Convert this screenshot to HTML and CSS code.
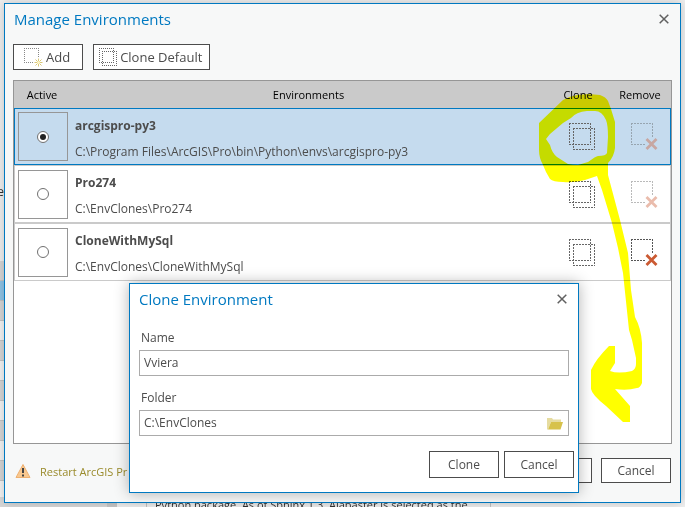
FILE: index.html
```html
<!DOCTYPE html>
<html lang="en">
<head>
    <meta charset="UTF-8">
    <meta name="viewport" content="width=device-width, initial-scale=1.0">
    <title>Manage Environments</title>
    <link rel="stylesheet" href="styles.css">
</head>
<body>
    <!-- Shared icon shapes -->
    <svg class="defs" width="0" height="0" aria-hidden="true">
        <symbol id="icon-clone" viewBox="0 0 27 27">
            <path d="M0 .5H22M.5 0V22M0 21.5H22M21.5 0V22M4 5.5H26M4.5 5V27M4 26.5H26M25.5 5V27" fill="none" stroke="#666" stroke-dasharray="2 1"/>
        </symbol>
        <symbol id="icon-remove" viewBox="0 0 27 27">
            <path d="M0 .5H22M.5 0V22M0 21.5H15M21.5 0V14" fill="none" stroke="#555" stroke-dasharray="2 1"/>
            <path d="M15.5 16L25.5 26M25.5 16L15.5 26" fill="none" stroke="#cb5a33" stroke-width="2.8"/>
        </symbol>
    </svg>

    <!-- Application behind the windows -->
    <div class="backdrop">
        <div class="side-list">
            <span class="side-text">e</span>
            <i class="grey"></i><i class="blue"></i><i class="grey"></i><i></i><i class="grey"></i><i></i><i class="grey"></i><i></i><i class="grey"></i><i></i><i class="grey"></i><i></i>
        </div>
        <div class="bottom-strip">
            <div class="list-end"></div>
            <div class="scroll-end"></div>
            <p class="package-text">Python package. As of Sphinx 1.3, Alabaster is selected as the</p>
        </div>
    </div>

    <main class="window">
        <header class="title-bar">
            <h1>Manage Environments</h1>
            <button class="close" aria-label="Close">
                <svg width="10" height="10" viewBox="0 0 10 10"><path d="M.7 .7L9.3 9.3M9.3 .7L.7 9.3" stroke="#606060" stroke-width="1.5"/></svg>
            </button>
        </header>

        <div class="toolbar">
            <button class="tool add">
                <svg width="19" height="19" viewBox="0 0 19 19">
                    <path d="M0 .5H15M.5 0V15M0 14.5H10M14.5 0V10" fill="none" stroke="#888" stroke-dasharray="1 1"/>
                    <path d="M14.5 10.5V18.5M10.5 14.5H18.5M11.5 11.5L17.5 17.5M17.5 11.5L11.5 17.5" stroke="#d9c878"/>
                    <circle cx="14.5" cy="14.5" r="1.5" fill="#fff6c9"/>
                </svg>
                Add
            </button>
            <button class="tool">
                <svg width="18" height="18" viewBox="0 0 18 18">
                    <path d="M0 .5H15M.5 0V15M0 14.5H15M14.5 0V15M3 3.5H18M3.5 3V18M3 17.5H18M17.5 3V18" fill="none" stroke="#666" stroke-dasharray="1 1"/>
                </svg>
                Clone Default
            </button>
        </div>

        <div class="env-list">
            <table class="env-table">
                <thead>
                    <tr>
                        <th class="col-active">Active</th>
                        <th>Environments</th>
                        <th class="col-clone">Clone</th>
                        <th class="col-remove">Remove</th>
                    </tr>
                </thead>
                <tbody>
                    <tr class="selected">
                        <td><label class="pick"><input type="radio" name="env" aria-label="arcgispro-py3" checked></label></td>
                        <td class="env">
                            <strong>arcgispro-py3</strong>
                            <span>C:\Program Files\ArcGIS\Pro\bin\Python\envs\arcgispro-py3</span>
                        </td>
                        <td><button class="icon" aria-label="Clone arcgispro-py3"><svg width="27" height="27"><use href="#icon-clone"/></svg></button></td>
                        <td><button class="icon" aria-label="Remove arcgispro-py3" disabled><svg width="27" height="27"><use href="#icon-remove"/></svg></button></td>
                    </tr>
                    <tr>
                        <td><label class="pick"><input type="radio" name="env" aria-label="Pro274"></label></td>
                        <td class="env">
                            <strong>Pro274</strong>
                            <span>C:\EnvClones\Pro274</span>
                        </td>
                        <td><button class="icon" aria-label="Clone Pro274"><svg width="27" height="27"><use href="#icon-clone"/></svg></button></td>
                        <td><button class="icon" aria-label="Remove Pro274" disabled><svg width="27" height="27"><use href="#icon-remove"/></svg></button></td>
                    </tr>
                    <tr>
                        <td><label class="pick"><input type="radio" name="env" aria-label="CloneWithMySql"></label></td>
                        <td class="env">
                            <strong>CloneWithMySql</strong>
                            <span>C:\EnvClones\CloneWithMySql</span>
                        </td>
                        <td><button class="icon" aria-label="Clone CloneWithMySql"><svg width="27" height="27"><use href="#icon-clone"/></svg></button></td>
                        <td><button class="icon" aria-label="Remove CloneWithMySql"><svg width="27" height="27"><use href="#icon-remove"/></svg></button></td>
                    </tr>
                </tbody>
            </table>
        </div>

        <footer class="actions">
            <svg width="16" height="16" viewBox="0 0 16 16">
                <path d="M8 1.5L15 14.5H1Z" fill="#f9c88f" stroke="#eeb071" stroke-linejoin="round"/>
                <path d="M8 5V10M8 11.5V13.5" stroke="#444" stroke-width="2"/>
            </svg>
            <span class="warning">Restart ArcGIS Pr</span>
            <button class="action" aria-label="OK"></button>
            <button class="action">Cancel</button>
        </footer>
    </main>

    <!-- Highlighter from the Clone button to the dialog -->
    <svg class="marker" width="685" height="507" viewBox="0 0 685 507" aria-hidden="true">
        <path fill="#ff0" fill-rule="evenodd" d="M577 95L588 94L600 95Q606 97 608 101L611 109L615 122V148Q614 157 608 163V175L620 220L628 253L631 290L635 317Q641 328 642 343V383Q640 388 637 388Q627 391 615 389L630 406V422H623L606 406Q592 395 591 389V370Q596 359 609 346H615V363L610 371Q618 374 632 371Q636 369 636 364V358L632 340L629 330L623 273L618 248L612 223L602 190L597 176L585 180Q574 183 563 182Q553 182 550 179L546 172L543 165Q539 158 539 150V123L563 100Q570 96 577 95ZM587 111Q576 112 571 118L563 123L550 134L546 139L550 145Q552 153 557 157L568 164Q573 165 578 165L588 162Q596 156 598 156Q606 156 607 153L608 137Q608 125 606 120Q602 111 595 111Z"/>
    </svg>

    <form class="dialog" role="dialog" aria-labelledby="dialog-title">
        <div class="title-bar">
            <h2 id="dialog-title">Clone Environment</h2>
            <button type="button" class="close" aria-label="Close">
                <svg width="10" height="10" viewBox="0 0 10 10"><path d="M.7 .7L9.3 9.3M9.3 .7L.7 9.3" stroke="#606060" stroke-width="1.5"/></svg>
            </button>
        </div>
        <label for="name">Name</label>
        <div class="field">
            <input type="text" id="name" value="Vviera">
        </div>
        <label for="folder">Folder</label>
        <div class="field">
            <input type="text" id="folder" value="C:\EnvClones">
            <button type="button" class="browse" aria-label="Browse">
                <svg width="16" height="13" viewBox="0 0 16 13">
                    <path d="M0 12.5V1H5L6 2.5H14V5H4L1 12.5Z" fill="#e6dca0"/>
                    <path d="M1 12.5L4 5H16L13.5 12.5Z" fill="#d7c24b"/>
                </svg>
            </button>
        </div>
        <div class="dialog-buttons">
            <button type="button" class="action">Clone</button>
            <button type="button" class="action">Cancel</button>
        </div>
    </form>
</body>
</html>
```
FILE: styles.css
```css
* {
    box-sizing: border-box;
}
body {
    display: flex;
    min-height: 100vh;
    margin: 0;
    padding: 3px 4px 4px;
    overflow: hidden;
    background: #efefef;
    color: #4c4c4c;
    font-family: "Segoe UI", "Open Sans", sans-serif;
    font-size: 12px;
    line-height: 16px;
}
button,
input {
    margin: 0;
    color: inherit;
    font: inherit;
}
button {
    padding: 0;
    border: none;
    background: none;
}
svg {
    display: block;
    flex: none;
}
.defs {
    position: absolute;
}

/* Background application */
.backdrop {
    position: absolute;
    inset: 0;
    overflow: hidden;
}
.side-list {
    width: 4px;
    padding-top: 184px;
    overflow: hidden;
}
.side-text {
    display: flex;
    justify-content: flex-end;
    height: 77px;
    color: #333;
}
.side-list i {
    display: block;
    height: 20px;
    border-bottom: 1px solid #c4c4c4;
    background: #f4f4f4;
}
.side-list .grey {
    background: #d6d6d6;
}
.side-list .blue {
    background: #8fc4e6;
}
.bottom-strip {
    position: absolute;
    right: 0;
    bottom: 0;
    left: 0;
    display: flex;
    height: 10px;
    overflow: hidden;
}
.list-end {
    width: 107px;
    background: #d8d8d8;
}
.scroll-end {
    width: 10px;
    background: #c8c8c8;
}
.package-text {
    margin: 0 0 0 29px;
    padding: 0 22px 0 8px;
    border: solid #c4c4c4;
    border-width: 0 1px;
    color: #333;
    font-size: 11px;
    white-space: nowrap;
}

/* Main window */
.window {
    position: relative;
    display: flex;
    flex: 1;
    flex-direction: column;
    padding: 0 8px 19px;
    border: 1px solid #0079c1;
    background: #f7f8f8;
    box-shadow: 0 0 10px rgba(0, 0, 0, 0.2);
}
.title-bar {
    display: flex;
    align-items: center;
    justify-content: space-between;
    height: 30px;
}
h1,
h2 {
    margin: 0;
    color: #0079c1;
    font-size: 15px;
    font-weight: normal;
    line-height: 20px;
}
h1 {
    padding-left: 1px;
}
.toolbar {
    display: flex;
    gap: 10px;
    margin-top: 10px;
}
.tool {
    display: flex;
    align-items: center;
    gap: 3px;
    height: 26px;
    padding: 0 7px 0 5px;
    border: 1px solid #4c4c4c;
    background: #fff;
    font-size: 13px;
}
.add {
    padding: 0 12px 0 10px;
}
.close {
    padding: 3px;
}
.dialog .close {
    padding-right: 2px;
}
.env-list {
    flex: 1;
    margin-top: 10px;
    border: 1px solid #969696;
    background: #fff;
}
.env-table {
    width: 100%;
    border-spacing: 0;
    table-layout: fixed;
}
th {
    height: 27px;
    padding: 0;
    background: #cacaca;
    color: #000;
    font-size: 11px;
    font-weight: normal;
}
.col-active {
    width: 56px;
}
.col-clone,
.col-remove {
    width: 62px;
}
td {
    height: 58px;
    padding: 0;
    border: solid #cacaca;
    border-width: 1px 0;
}
td:first-child {
    padding-left: 3px;
    border-left-width: 1px;
}
td:last-child {
    border-right-width: 1px;
}
.selected td {
    height: 57px;
    border-color: #0079c1;
    background: #c5dbee;
}
.pick {
    display: flex;
    align-items: center;
    justify-content: center;
    width: 50px;
    height: 49px;
    border: 1px solid #969696;
}
.pick input {
    display: grid;
    place-content: center;
    width: 12px;
    height: 12px;
    border: 1px solid #707070;
    border-radius: 50%;
    background: #fff;
    appearance: none;
}
.pick input:checked::before {
    width: 6px;
    height: 6px;
    border-radius: 50%;
    background: #222;
    content: "";
}
.env {
    padding: 4px 0 0 5px;
}
.env strong,
.env span {
    display: block;
}
.env strong {
    margin-bottom: 10px;
    font-weight: 700;
}
.icon {
    display: block;
    margin-left: 22px;
}
.icon:disabled {
    opacity: 0.4;
}
.actions {
    display: flex;
    align-items: center;
    gap: 9px;
    margin-top: 14px;
    padding: 0 1px 0 2px;
}
.warning {
    flex: 1;
    padding-top: 2px;
    color: #9a8b2c;
    font-size: 11px;
}
.action {
    width: 70px;
    height: 25px;
    border: 1px solid #4c4c4c;
    background: #fff;
}

/* Highlighter */
.marker {
    position: absolute;
    top: 0;
    right: 0;
    mix-blend-mode: multiply;
    pointer-events: none;
}

/* Clone dialog */
.dialog {
    position: absolute;
    top: 283px;
    right: 106px;
    left: 129px;
    padding: 0 9px 14px;
    border: 1px solid #0079c1;
    background: #fff;
    box-shadow: 0 0 14px rgba(0, 0, 0, 0.3);
}
.dialog .title-bar {
    margin-bottom: 16px;
}
.dialog label {
    display: block;
    margin: 14px 0 4px 2px;
}
.field {
    display: flex;
    align-items: center;
    height: 26px;
    padding: 0 5px 0 4px;
    border: 1px solid #ababab;
}
.field input {
    flex: 1;
    min-width: 0;
    padding: 0;
    border: none;
    outline: none;
    background: none;
}
.dialog-buttons {
    display: flex;
    justify-content: flex-end;
    gap: 5px;
    margin: 15px -5px 0 0;
}
.dialog-buttons .action {
    height: 27px;
}
```
